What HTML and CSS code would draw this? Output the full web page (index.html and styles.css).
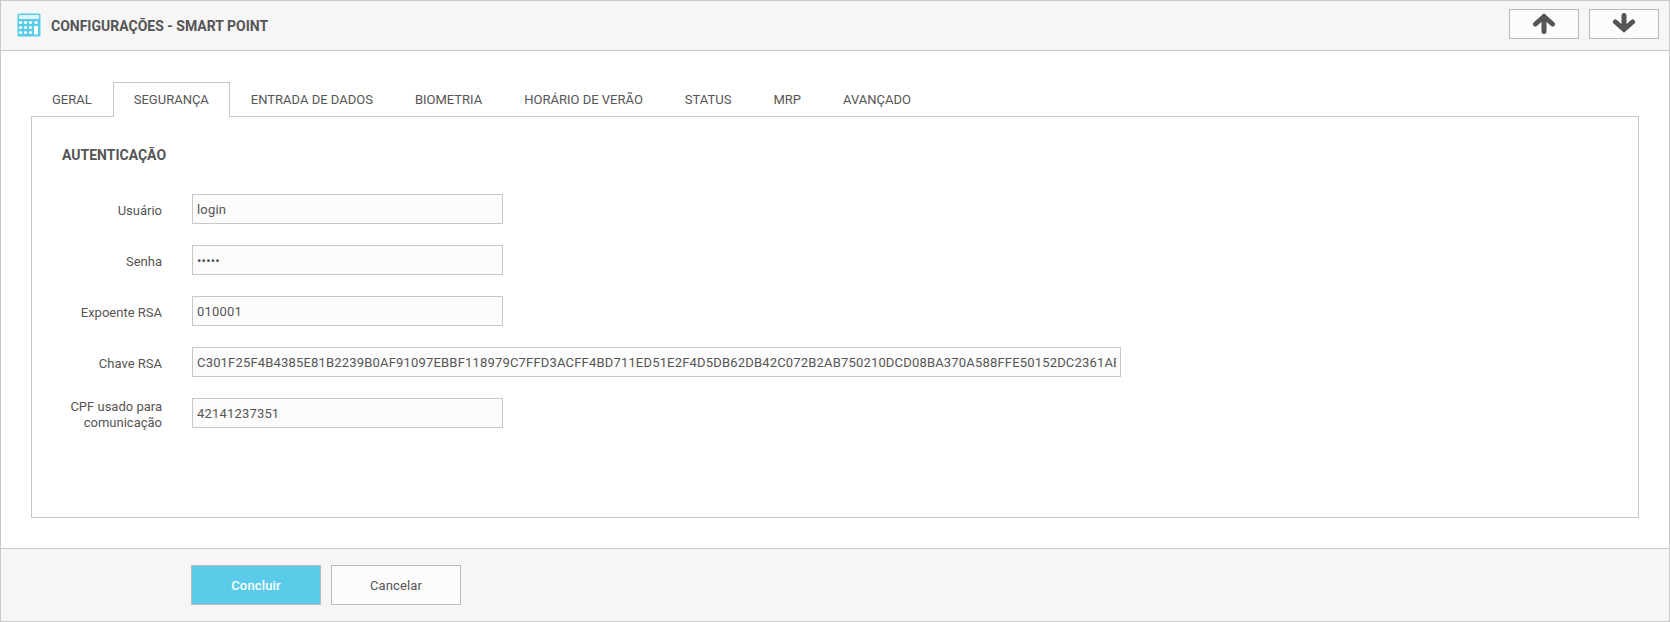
FILE: index.html
```html
<!DOCTYPE html>
<html lang="pt-BR">
<head>
<meta charset="utf-8">
<title>Configurações - Smart Point</title>
<link rel="stylesheet" href="styles.css">
</head>
<body>
<div class="app">
  <header class="top">
    <svg class="calc" width="24" height="24" viewBox="0 0 24 24">
      <rect x="0.5" y="0.5" width="23" height="23" rx="1.5" fill="#5bcbea"/>
      <rect x="2" y="2" width="20" height="4" fill="#dff5fb"/>
      <g fill="#fff">
        <circle cx="3.5" cy="9.5" r="1.6"/><circle cx="8.5" cy="9.5" r="1.6"/><circle cx="13.5" cy="9.5" r="1.6"/><circle cx="19" cy="9.5" r="1.6"/>
        <circle cx="3.5" cy="14.5" r="1.6"/><circle cx="8.5" cy="14.5" r="1.6"/><circle cx="13.5" cy="14.5" r="1.6"/>
        <circle cx="3.5" cy="19.5" r="1.6"/><circle cx="8.5" cy="19.5" r="1.6"/><circle cx="13.5" cy="19.5" r="1.6"/>
        <rect x="17" y="13" width="4" height="8.5" rx="1"/>
      </g>
    </svg>
    <h1 class="title">CONFIGURAÇÕES - SMART POINT</h1>
    <div class="nav">
      <button class="nav-btn" type="button" aria-label="Subir">
        <svg width="24" height="24" viewBox="0 0 24 24"><path d="M12 19.5V5M3.5 12 12 4.5 20.5 12" fill="none" stroke="#555" stroke-width="5" stroke-linecap="round"/></svg>
      </button>
      <button class="nav-btn" type="button" aria-label="Descer">
        <svg width="24" height="24" viewBox="0 0 24 24"><path d="M12 3.5V17M3.5 10 12 17.5 20.5 10" fill="none" stroke="#555" stroke-width="5" stroke-linecap="round"/></svg>
      </button>
    </div>
  </header>
  <main class="content">
    <nav class="tabs">
      <a class="tab">GERAL</a>
      <a class="tab active">SEGURANÇA</a>
      <a class="tab">ENTRADA DE DADOS</a>
      <a class="tab">BIOMETRIA</a>
      <a class="tab">HORÁRIO DE VERÃO</a>
      <a class="tab">STATUS</a>
      <a class="tab">MRP</a>
      <a class="tab">AVANÇADO</a>
    </nav>
    <section class="panel">
      <h2 class="section-title">AUTENTICAÇÃO</h2>
      <div class="form">
        <div class="row"><label class="label">Usuário</label><input class="input" type="text" value="login"></div>
        <div class="row"><label class="label">Senha</label><input class="input" type="password" value="12345"></div>
        <div class="row"><label class="label">Expoente RSA</label><input class="input" type="text" value="010001"></div>
        <div class="row"><label class="label">Chave RSA</label><input class="input wide" type="text" value="C301F25F4B4385E81B2239B0AF91097EBBF118979C7FFD3ACFF4BD711ED51E2F4D5DB62DB42C072B2AB750210DCD08BA370A588FFE50152DC2361AE7B3C1D9F0"></div>
        <div class="row"><label class="label">CPF usado para comunicação</label><input class="input" type="text" value="42141237351"></div>
      </div>
    </section>
  </main>
  <footer class="bottom">
    <button class="btn primary" type="button">Concluir</button>
    <button class="btn" type="button">Cancelar</button>
  </footer>
</div>
</body>
</html>
```
FILE: styles.css
```css
* { box-sizing: border-box; }
html, body { margin: 0; padding: 0; background: #fff; }
body { font-family: Roboto, "Liberation Sans", sans-serif; font-size: 13px; color: #555; }
.app { width: 1670px; height: 622px; border: 1px solid #c8c8c8; display: flex; flex-direction: column; overflow: hidden; }
.top { height: 50px; flex: none; background: #f6f6f6; border-bottom: 1px solid #c8c8c8; display: flex; align-items: center; padding: 0 10px 0 16px; }
.calc { flex: none; margin-bottom: 1px; }
.title { margin: 0 0 0 10px; font-size: 14px; font-weight: 700; color: #555; }
.nav { margin-left: auto; margin-bottom: 3px; display: flex; gap: 10px; }
.nav-btn { width: 70px; height: 30px; padding: 0; background: #fcfcfc; border: 1px solid #bbb; display: flex; align-items: center; justify-content: center; }
.content { flex: 1; padding: 31px 30px 30px 30px; display: flex; flex-direction: column; min-height: 0; }
.tabs { display: flex; height: 34px; flex: none; position: relative; z-index: 1; }
.tab { height: 35px; padding: 0 20px 2px; border: 1px solid transparent; border-bottom: 0; display: flex; align-items: center; color: #555; font-size: 13px; }
.tab.active { background: #fff; border-color: #c8c8c8; }
.panel { flex: 1; border: 1px solid #c8c8c8; padding: 31px 30px 0; background: #fff; }
.section-title { margin: 0; font-size: 14px; font-weight: 700; line-height: 15px; color: #555; }
.form { margin-top: 31px; display: flex; flex-direction: column; gap: 21px; }
.row { display: flex; align-items: center; height: 30px; }
.label { width: 100px; flex: none; padding-top: 4px; text-align: right; color: #555; line-height: 16px; }
.input { margin-left: 30px; width: 311px; height: 30px; padding: 1px 4px 0; background: #fcfcfc; border: 1px solid #c8c8c8; border-radius: 0; color: #555; font: 13px Roboto, "Liberation Sans", sans-serif; letter-spacing: 0.18px; outline: none; }
.input.wide { width: 929px; }
.bottom { height: 73px; flex: none; background: #f6f6f6; border-top: 1px solid #c8c8c8; display: flex; align-items: center; gap: 10px; padding: 0 0 0 190px; }
.btn { width: 130px; height: 40px; padding: 0; background: #fcfcfc; border: 1px solid #bbb; color: #555; font: 13px Roboto, "Liberation Sans", sans-serif; letter-spacing: 0.15px; }
.btn.primary { background: #5bcbea; color: #fff; font-weight: 500; }
```
